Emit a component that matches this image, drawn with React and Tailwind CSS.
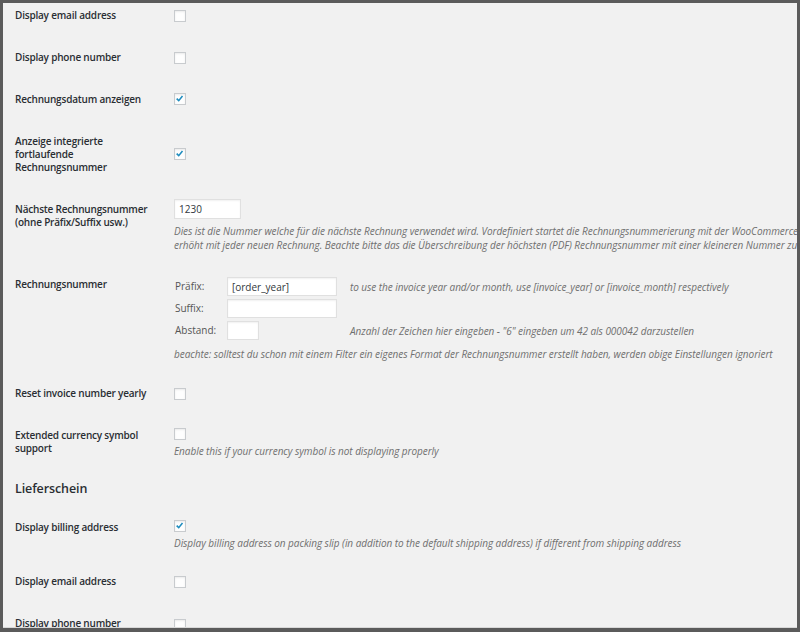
const Check = ({ checked, className = '' }) => (
  <span
    className={`block w-[12px] h-[12px] bg-[#fefefe] border border-[#c8cbce] shadow-[inset_0_1px_2px_rgba(0,0,0,0.08)] ${className}`}
  >
    {checked && (
      <svg viewBox="0 0 12 12" className="w-[10px] h-[10px]">
        <polyline points="2,5.5 4.5,8 9,2.5" fill="none" stroke="#1e8cbe" strokeWidth="1.9" />
      </svg>
    )}
  </span>
);

const Field = ({ value = '', className = '' }) => (
  <input
    readOnly
    defaultValue={value}
    className={`block bg-white border border-[#e0e0e0] shadow-[inset_0_1px_2px_rgba(0,0,0,0.06)] px-[4px] text-[10px] text-[#32373c] outline-none ${className}`}
  />
);

const Desc = ({ children, className = '' }) => (
  <div className={`italic text-[10px] leading-[14px] tracking-[-0.05px] text-[#6f6f6f] whitespace-nowrap ${className}`}>
    {children}
  </div>
);

const Row = ({ label, className = 'pt-[12px] pb-[13px]', children }) => (
  <div className={`flex ${className}`}>
    <div className="w-[159px] shrink-0 pr-[6px] pt-[4px] text-[10px] leading-[13px] tracking-[-0.2px] font-semibold text-[#2a2e33]">
      {label}
    </div>
    <div className="flex-1 min-w-0">{children}</div>
  </div>
);

export default function App() {
  return (
    <div className="w-[800px] h-[632px] bg-[#5b5b5b] pt-[3px] pl-[3px] pr-[3px] pb-[4px] font-['Open_Sans',sans-serif]">
      <div className="h-full bg-[#f1f1f1] overflow-hidden border-b border-[#d8d8d8]">
        <div className="-mt-[10px] pl-[12px]">
          <Row label="Display email address">
            <Check className="mt-[5px]" />
          </Row>
          <Row label="Display phone number">
            <Check className="mt-[5px]" />
          </Row>
          <Row label="Rechnungsdatum anzeigen">
            <Check checked className="mt-[4px]" />
          </Row>
          <Row label={<>Anzeige integrierte<br />fortlaufende<br />Rechnungsnummer</>}>
            <Check checked className="mt-[17px]" />
          </Row>
          <Row label={<>Nächste Rechnungsnummer<br />(ohne Präfix/Suffix usw.)</>} className="pt-[12px] pb-[10px]">
            <Field value="1230" className="w-[67px] h-[20px]" />
            <Desc className="mt-[5px]">
              Dies ist die Nummer welche für die nächste Rechnung verwendet wird. Vordefiniert startet die Rechnungsnummerierung mit der WooCommerce Bestellnummer und wird automatisch
            </Desc>
            <Desc>
              erhöht mit jeder neuen Rechnung. Beachte bitte das die Überschreibung der höchsten (PDF) Rechnungsnummer mit einer kleineren Nummer zu Problemen führen kann.
            </Desc>
          </Row>
          <Row label="Rechnungsnummer" className="pt-[12px] pb-[10px]">
            <div className="mt-[3px] flex flex-col gap-[3px] text-[10px] text-[#555]">
              <div className="flex items-center h-[19px]">
                <span className="w-[53px] pl-[1px]">Präfix:</span>
                <Field value="[order_year]" className="w-[110px] h-[19px]" />
                <Desc className="ml-[13px]">
                  to use the invoice year and/or month, use [invoice_year] or [invoice_month] respectively
                </Desc>
              </div>
              <div className="flex items-center h-[19px]">
                <span className="w-[53px] pl-[1px]">Suffix:</span>
                <Field className="w-[110px] h-[19px]" />
              </div>
              <div className="flex items-center h-[19px]">
                <span className="w-[53px] pl-[1px]">Abstand:</span>
                <Field className="w-[32px] h-[19px]" />
                <Desc className="ml-[91px]">
                  Anzahl der Zeichen hier eingeben - "6" eingeben um 42 als 000042 darzustellen
                </Desc>
              </div>
            </div>
            <Desc className="mt-[7px]">
              beachte: solltest du schon mit einem Filter ein eigenes Format der Rechnungsnummer erstellt haben, werden obige Einstellungen ignoriert
            </Desc>
          </Row>
          <Row label="Reset invoice number yearly">
            <Check className="mt-[5px]" />
          </Row>
          <Row label={<>Extended currency symbol<br />support</>}>
            <Check className="mt-[3px]" />
            <Desc className="mt-[4px]">Enable this if your currency symbol is not displaying properly</Desc>
          </Row>
          <h2 className="mt-[9px] mb-[6.5px] text-[12.5px] leading-[18px] tracking-[-0.1px] font-semibold text-[#2a2e33]">
            Lieferschein
          </h2>
          <Row label="Display billing address" className="pt-[12px] pb-[8.5px]">
            <Check checked className="mt-[3.5px]" />
            <Desc className="mt-[4px]">
              Display billing address on packing slip (in addition to the default shipping address) if different from shipping address
            </Desc>
          </Row>
          <Row label="Display email address">
            <Check className="mt-[5.5px]" />
          </Row>
          <Row label="Display phone number">
            <Check className="mt-[5.5px]" />
          </Row>
        </div>
      </div>
    </div>
  );
}
